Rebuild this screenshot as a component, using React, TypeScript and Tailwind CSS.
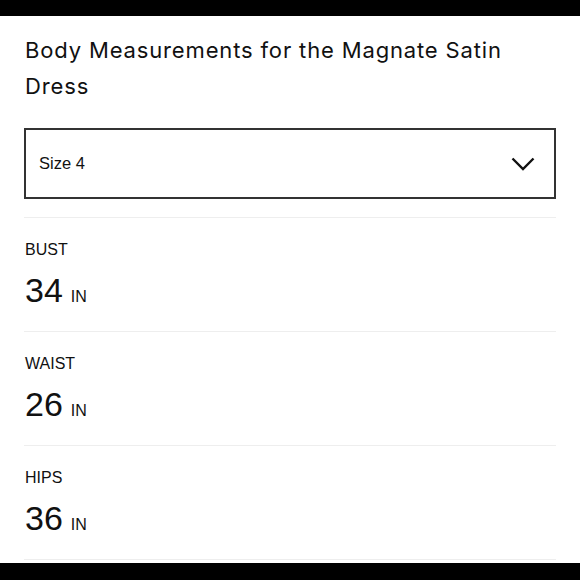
import React from "react";

const rows = [
  { label: "BUST", value: "34" },
  { label: "WAIST", value: "26" },
  { label: "HIPS", value: "36" },
];

export default function App() {
  return (
    <div className="w-[580px] h-[580px] bg-white flex flex-col overflow-hidden" style={{ fontFamily: '"Liberation Sans", Arial, sans-serif' }}>
      <div className="h-[16px] bg-black shrink-0" />
      <div className="flex-1 px-[24px] flex flex-col">
        <h1
          className="mt-[16px] text-[22px] leading-[36px] tracking-[0.85px] text-[#111] font-normal pl-[1px] pr-[20px]"
          style={{ fontFamily: 'Inter, "Noto Sans", sans-serif' }}
        >
          Body Measurements for the Magnate Satin Dress
        </h1>
        <div className="mt-[24px] h-[71px] border-2 border-[#333] flex items-center justify-between pl-[13px] pr-[19px]">
          <span className="text-[16.5px] text-[#111]">Size 4</span>
          <svg width="24" height="14" viewBox="0 0 24 14" fill="none" stroke="#111" strokeWidth="2.4">
            <path d="M1.5 1.5 L12 12 L22.5 1.5" />
          </svg>
        </div>
        <div className="mt-[18px] h-px bg-[#eeeeee]" />
        {rows.map((r) => (
          <div key={r.label}>
            <div className="h-[113px] flex flex-col pl-[1px]">
              <div className="mt-[22px] text-[16px] leading-[20px] text-[#111]">{r.label}</div>
              <div className="mt-[13px] flex items-baseline text-[#111]">
                <span className="text-[34px] leading-[34px]">{r.value}</span>
                <span className="ml-[8px] text-[16px]">IN</span>
              </div>
            </div>
            <div className="h-px bg-[#eeeeee]" />
          </div>
        ))}
      </div>
      <div className="h-[17px] bg-black shrink-0" />
    </div>
  );
}
